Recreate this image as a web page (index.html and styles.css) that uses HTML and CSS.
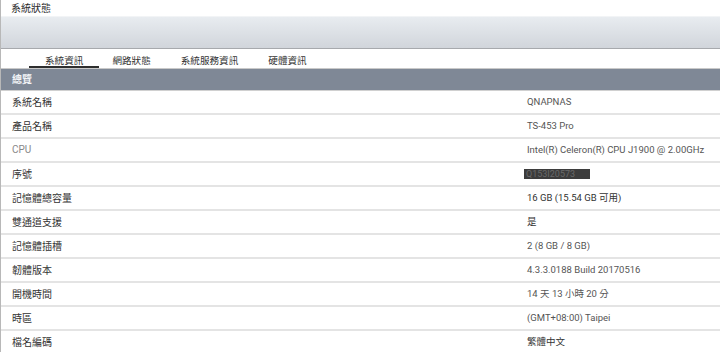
FILE: index.html
```html
<!DOCTYPE html>
<html>
<head>
<meta charset="utf-8">
<link rel="stylesheet" href="styles.css">
</head>
<body>
<div class="page">
  <div class="title">系統狀態</div>
  <div class="toolbar"></div>
  <div class="tabs">
    <div class="tab active">系統資訊</div>
    <div class="tab">網路狀態</div>
    <div class="tab">系統服務資訊</div>
    <div class="tab">硬體資訊</div>
  </div>
  <div class="section">總覽</div>
  <div class="rows">
    <div class="row"><div class="label">系統名稱</div><div class="value">QNAPNAS</div></div>
    <div class="row"><div class="label">產品名稱</div><div class="value">TS-453 Pro</div></div>
    <div class="row"><div class="label muted">CPU</div><div class="value">Intel(R) Celeron(R) CPU J1900 @ 2.00GHz</div></div>
    <div class="row"><div class="label">序號</div><div class="value"><span class="masked">Q153I20573</span></div></div>
    <div class="row"><div class="label">記憶體總容量</div><div class="value dark">16 GB (15.54 GB 可用)</div></div>
    <div class="row"><div class="label">雙通道支援</div><div class="value dark">是</div></div>
    <div class="row"><div class="label">記憶體插槽</div><div class="value">2 (8 GB / 8 GB)</div></div>
    <div class="row"><div class="label">韌體版本</div><div class="value">4.3.3.0188 Build 20170516</div></div>
    <div class="row"><div class="label">開機時間</div><div class="value">14 天 13 小時 20 分</div></div>
    <div class="row"><div class="label">時區</div><div class="value">(GMT+08:00) Taipei</div></div>
    <div class="row"><div class="label">檔名編碼</div><div class="value dark">繁體中文</div></div>
  </div>
</div>
</body>
</html>
```

FILE: styles.css
```css
html, body {
  margin: 0;
  padding: 0;
  background: #ffffff;
}
body {
  font-family: Roboto, "Noto Sans CJK TC", sans-serif;
  font-size: 10px;
  color: #333;
  overflow: hidden;
}
.page {
  width: 720px;
  height: 352px;
  border-left: 1px solid #b8b8b8;
  box-sizing: border-box;
}
.title {
  height: 16px;
  line-height: 17px;
  padding-left: 10px;
  font-size: 10px;
  color: #2a2a2a;
}
.toolbar {
  background: linear-gradient(#e8ecf0, #d1d5db);
  border-top: 1px solid #f2f4f6;
  border-bottom: 1px solid #a7a9ad;
  box-sizing: border-box;
  height: 33px;
}
.tabs {
  height: 20px;
  display: flex;
  padding-left: 28px;
  box-sizing: border-box;
  border-bottom: 1px solid #c9c9c9;
}
.tab {
  height: 19px;
  line-height: 23px;
  box-sizing: border-box;
  padding: 0 15px;
  font-size: 9.6px;
  color: #333;
}
.tab.active {
  border-bottom: 2px solid #2e2e2e;
  padding: 0 16px;
  margin-right: -2px;
}
.section {
  height: 21px;
  line-height: 21px;
  background: #7f8896;
  color: #f2f4f7;
  font-weight: bold;
  font-size: 10px;
  padding-left: 11px;
  border-bottom: 1px solid #d0d0d0;
}
.row {
  display: grid;
  grid-template-columns: 526px 1fr;
  height: 24px;
  box-sizing: border-box;
  border-bottom: 2px solid #e4e4e4;
  align-items: center;
  padding-bottom: 2px;
}
.label {
  padding-left: 11px;
  font-size: 10px;
  color: #333;
}
.label.muted {
  color: #888;
}
.value {
  font-size: 9.5px;
  color: #555;
  white-space: nowrap;
}
.value.dark {
  color: #333;
}
.masked {
  display: inline-block;
  vertical-align: middle;
  background: #3c3c3c;
  color: #6a6a6a;
  width: 66px;
  height: 10px;
  line-height: 10px;
  font-size: 9px;
  padding-left: 2px;
  box-sizing: border-box;
  overflow: hidden;
  margin-left: -3px;
}
```
